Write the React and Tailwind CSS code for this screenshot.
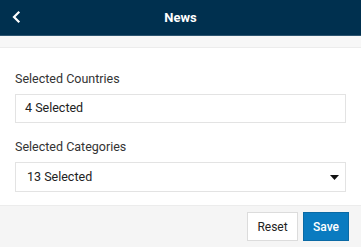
export default function App() {
  return (
    <div className="flex h-[247px] w-[361px] flex-col bg-white font-['Roboto',sans-serif] text-[12.5px] text-[#333]">
      <header className="relative flex h-[36px] shrink-0 items-center justify-center border-b border-[#2d5570] bg-[#00304f]">
        <button type="button" className="absolute left-[11px] top-[10px] text-white" aria-label="Back">
          <svg width="12" height="14" viewBox="0 0 12 14" fill="none" stroke="currentColor" strokeWidth="2.2" strokeLinecap="square">
            <path d="M7.5 2.5L3 7l4.5 4.5" />
          </svg>
        </button>
        <h1 className="text-[13px] font-bold text-white">News</h1>
      </header>
      <div className="h-[12px] shrink-0 border-b border-[#ececec] bg-[#f7f7f7]" />
      <main className="flex-1 px-[15px] pt-[23px]">
        <label className="block leading-[15px]">Selected Countries</label>
        <div className="mt-[8px] flex h-[29px] items-center border border-[#e3e3e3] px-[9px] text-[#222]">
          4 Selected
        </div>
        <label className="mt-[16px] block leading-[15px]">Selected Categories</label>
        <div className="mt-[8px] flex h-[30px] items-center justify-between border border-[#e3e3e3] pl-[11px] pr-[6px] text-[#222]">
          <span>13 Selected</span>
          <svg width="9" height="5" viewBox="0 0 9 5" fill="#111">
            <path d="M0 0h9L4.5 5z" />
          </svg>
        </div>
      </main>
      <footer className="flex h-[42px] shrink-0 items-center justify-end gap-[5px] border-t border-[#ececec] bg-[#f5f5f5] pr-[12px]">
        <button type="button" className="h-[29px] w-[51px] border border-[#dcdcdc] bg-white text-[12px] text-[#222]">
          Reset
        </button>
        <button type="button" className="h-[29px] w-[46px] border border-[#0a6aa5] bg-[#0a7bc0] text-[12px] font-medium text-white">
          Save
        </button>
      </footer>
    </div>
  );
}
